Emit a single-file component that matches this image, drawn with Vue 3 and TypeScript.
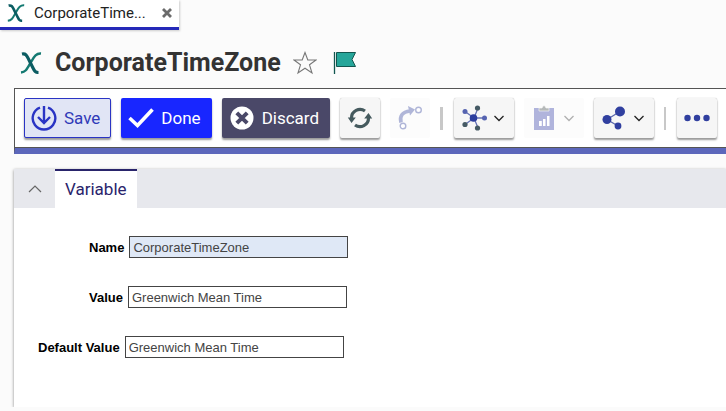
<script setup lang="ts">
import { computed, ref } from 'vue'

interface Field {
  id: string
  label: string
  value: string
  locked: boolean
  wide: boolean
}

const title = 'CorporateTimeZone'
const tabTitle = computed(() => (title.length > 14 ? `${title.slice(0, 13)}...` : title))
const starred = ref(false)
const expanded = ref(true)
const fields = ref<Field[]>([
  { id: 'name', label: 'Name', value: 'CorporateTimeZone', locked: true, wide: false },
  { id: 'value', label: 'Value', value: 'Greenwich Mean Time', locked: false, wide: false },
  { id: 'default-value', label: 'Default Value', value: 'Greenwich Mean Time', locked: false, wide: true },
])
</script>

<template>
  <div class="page">
    <nav class="tabs" aria-label="Open items">
      <div class="doc-tab">
        <svg class="tab-logo" viewBox="0 0 22 22" aria-hidden="true">
          <path d="M21 1.500C16 1 14 5 11 10C7 17 6 20 1 20.500" fill="none" stroke="#147a72" stroke-width="2.400" />
          <path d="M2 2C6 1 7 4 9 8L12.500 15C14.500 19 15 20.500 18.500 20.500" fill="none" stroke="#0b5c62" stroke-width="3.200" />
        </svg>
        <a class="tab-name" href="#variable">{{ tabTitle }}</a>
        <button class="tab-close" type="button" aria-label="Close">
          <svg viewBox="0 0 12 12"><path d="M2 2L10 10M10 2L2 10" stroke="#6b6b6b" stroke-width="2.800" /></svg>
        </button>
      </div>
    </nav>

    <header class="heading">
      <svg class="logo" viewBox="0 0 22 22" aria-hidden="true">
        <path d="M21 1.500C16 1 14 5 11 10C7 17 6 20 1 20.500" fill="none" stroke="#147a72" stroke-width="2.400" />
        <path d="M2 2C6 1 7 4 9 8L12.500 15C14.500 19 15 20.500 18.500 20.500" fill="none" stroke="#0b5c62" stroke-width="3.200" />
      </svg>
      <h1>{{ title }}</h1>
      <button class="plain star" type="button" aria-label="Favorite" :aria-pressed="starred" @click="starred = !starred">
        <svg viewBox="0 0 24 24"><path d="M12 1.500L14.800 9H23L16.500 13.800L19 22L12 17.200L5 22L7.500 13.800L1 9H9.200Z" :fill="starred ? '#777' : 'none'" stroke="#777" stroke-width="1.100" /></svg>
      </button>
      <button class="plain flag" type="button" aria-label="Flag">
        <svg viewBox="0 0 24 24"><path d="M1.500 1V23" stroke="#12564f" stroke-width="1.300" /><path d="M3.500 1.500H22.500L19 8.500L22.500 15.500H3.500Z" fill="#26a69a" stroke="#12564f" /></svg>
      </button>
    </header>

    <div class="toolbar" role="toolbar" aria-label="Actions">
      <button class="btn save" type="button">
        <svg viewBox="0 0 26 26"><path d="M9 2.600A11.300 11.300 0 1 0 17 2.600M13 1V17M7 12L13 18L19 12" fill="none" stroke="#2a34c4" stroke-width="2.400" /></svg>
        Save
      </button>
      <button class="btn done" type="button">
        <svg viewBox="0 0 26 26"><path d="M1.500 13L9.500 20.500L24.500 4.500" fill="none" stroke="#fff" stroke-width="3.600" /></svg>
        Done
      </button>
      <button class="btn discard" type="button">
        <svg viewBox="0 0 26 26"><circle cx="13" cy="13" r="11.500" fill="#fff" /><path d="M7.800 7.800L18.200 18.200M18.200 7.800L7.800 18.200" stroke="#4a4868" stroke-width="4" /></svg>
        Discard
      </button>
      <button class="btn tool" type="button" aria-label="Refresh">
        <svg viewBox="0 0 26 26"><g fill="none" stroke="#455a5e" stroke-width="3.200"><path d="M4.500 13A8.500 8.500 0 0 1 18 6M21.500 13A8.500 8.500 0 0 1 8 20" /></g><path d="M.8 12.500H8.800L4.500 18ZM17.200 13.500H25.200L21.500 8Z" fill="#455a5e" /></svg>
      </button>
      <button class="btn tool" type="button" aria-label="Promote" disabled>
        <svg viewBox="0 0 26 26"><path d="M4 17.500Q1.500 7.500 13 6" fill="none" stroke="#b0b6d8" stroke-width="3.600" /><path d="M11 1L18 4.500L13 10.500Z" fill="#b0b6d8" /><g fill="#fff" stroke="#b0b6d8" stroke-width="1.400"><circle cx="6" cy="21" r="2.800" /><circle cx="21.500" cy="5" r="2.800" /></g></svg>
      </button>
      <span class="divider"></span>
      <button class="btn tool" type="button" aria-label="Structure">
        <svg viewBox="0 0 26 26"><path d="M13 13L4 6.500M13 13L17 3M13 13H24M13 13L17 23M13 13L4 19.500" stroke="#6573b5" stroke-width="1.300" /><circle cx="12.500" cy="13" r="3.800" fill="#2c3e9e" /><g fill="#5563b0"><circle cx="4" cy="6.500" r="2.500" /><circle cx="23.500" cy="13" r="2.500" /></g><g fill="#455a64"><circle cx="16.500" cy="3" r="2.600" /><circle cx="16.500" cy="23" r="2.600" /><circle cx="4" cy="19.500" r="2.600" /></g></svg>
        <svg class="caret" viewBox="0 0 10 10"><path d="M.5 3L5 7.500L9.500 3" fill="none" stroke="#222" stroke-width="1.300" /></svg>
      </button>
      <button class="btn tool" type="button" aria-label="Reports" disabled>
        <svg viewBox="0 0 26 26"><path d="M3 3H23V25H3Z" fill="#b0b4dc" /><path d="M8 6V3H11Q13 -2 15 3H18V6Z" fill="#b5b9b9" stroke="#fafafa" stroke-width=".6" /><path d="M8 16H10.800V21H8ZM12 14H14.500V21H12ZM16 11H18.500V21H16Z" fill="#fff" /></svg>
        <svg class="caret" viewBox="0 0 10 10"><path d="M.5 3L5 7.500L9.500 3" fill="none" stroke="#b0b0b0" stroke-width="1.300" /></svg>
      </button>
      <button class="btn tool" type="button" aria-label="Share">
        <svg viewBox="0 0 26 26"><path d="M6 14.500L19 6.500M6 14.500L17 21" stroke="#5b68ae" stroke-width="1.400" /><g fill="#303f9f"><circle cx="6" cy="14.500" r="4.500" /><circle cx="19" cy="6.500" r="5" /><circle cx="17" cy="21" r="3.400" /></g></svg>
        <svg class="caret" viewBox="0 0 10 10"><path d="M.5 3L5 7.500L9.500 3" fill="none" stroke="#222" stroke-width="1.300" /></svg>
      </button>
      <span class="divider thin"></span>
      <button class="btn tool" type="button" aria-label="More">
        <svg viewBox="0 0 26 26"><g fill="#303f9f"><circle cx="3.500" cy="13" r="3.200" /><circle cx="13" cy="13" r="3.200" /><circle cx="22.500" cy="13" r="3.200" /></g></svg>
      </button>
    </div>

    <main class="panel">
      <div class="panel-head">
        <button class="plain collapse" type="button" aria-label="Collapse" :aria-expanded="expanded" @click="expanded = !expanded">
          <svg viewBox="0 0 14 8"><path d="M1 7L7 1L13 7" fill="none" stroke="#666" stroke-width="1.200" /></svg>
        </button>
        <a class="panel-tab" href="#variable">Variable</a>
      </div>
      <form v-show="expanded" id="variable" class="form" @submit.prevent>
        <div v-for="field in fields" :key="field.id" class="row" :class="{ wide: field.wide }">
          <label :for="field.id">{{ field.label }}</label>
          <input :id="field.id" v-model="field.value" type="text" :readonly="field.locked" />
        </div>
      </form>
    </main>
  </div>
</template>

<style>
body {
  background: #fbfbfb;
  overflow: hidden;
}
</style>

<style scoped>
* {
  box-sizing: border-box;
}
.page {
  font-family: Roboto, sans-serif;
  color: #333;
}
button {
  font: inherit;
  padding: 0;
  border: 0;
  background: none;
}
a {
  color: inherit;
  text-decoration: none;
}
svg {
  display: block;
  flex: none;
}
.tabs {
  display: flex;
}
.doc-tab {
  display: flex;
  align-items: center;
  width: 179px;
  height: 30px;
  padding: 0 6px 2px 7px;
  background: #fff;
  border-bottom: 3px solid #2529b8;
  box-shadow: 1px 1px 2px #ccc;
}
.tab-logo {
  width: 18px;
  height: 18px;
}
.tab-name {
  flex: 1;
  margin-left: 9px;
  font-size: 15px;
  line-height: 20px;
  color: #222;
  white-space: nowrap;
}
.tab-close svg {
  width: 12px;
  height: 12px;
}
.heading {
  display: flex;
  align-items: center;
  height: 58px;
  padding: 8px 20px 0;
}
.logo {
  width: 22px;
  height: 22px;
}
h1 {
  margin: 0 12px 0 13px;
  font-size: 25px;
  line-height: 32px;
  font-weight: 700;
}
.star svg,
.flag svg {
  width: 24px;
  height: 24px;
}
.flag {
  margin-left: 16px;
}
.toolbar {
  display: flex;
  align-items: center;
  gap: 10px;
  height: 66px;
  margin-left: 14px;
  padding: 0 0 1px 9px;
  background: #fff;
  border: solid #555;
  border-width: 1px 0 0 1px;
  border-bottom: 6px solid #5c67bb;
  box-shadow: inset 0 -1px #555;
}
.btn {
  flex: none;
  display: flex;
  align-items: center;
  height: 40px;
  gap: 7px;
  border-radius: 2px;
  font-size: 17px;
  line-height: 24px;
  box-shadow: 0 2px 2px #999;
}
.btn svg {
  width: 26px;
  height: 26px;
}
.save {
  padding: 0 10px 0 6px;
  color: #303ab8;
  background: #e1e5f5;
  border: 1px solid #2a34c4;
}
.done,
.discard {
  padding: 0 11px 0 7px;
  color: #fff;
  background: #1826ff;
}
.discard {
  background: #4a4868;
}
.tool {
  padding: 0 7px;
  background: #f6f6f6;
  box-shadow: 0 2px 2px #999, 0 0 1px #aaa;
}
.tool:disabled {
  background: #fcfcfc;
  box-shadow: none;
}
.btn .caret {
  width: 10px;
  height: 10px;
}
.tool:has(.caret) {
  padding-right: 10px;
}
.divider {
  flex: none;
  width: 3px;
  height: 23px;
  margin-right: 1px;
  background: #c8c8c8;
}
.thin {
  width: 2px;
}
.panel {
  margin: 15px 0 0 14px;
  background: #fff;
  box-shadow: 0 1px 3px #888;
}
.panel-head {
  display: flex;
  height: 39px;
  background: #e7e8ed;
}
.collapse {
  display: flex;
  align-items: center;
  justify-content: center;
  width: 41px;
}
.collapse svg {
  width: 14px;
  height: 8px;
}
.panel-tab {
  padding: 6px 10px;
  font-size: 17px;
  line-height: 24px;
  color: #29246b;
  background: #fff;
  border-top: 2px solid #29246b;
}
.form {
  display: flex;
  flex-direction: column;
  gap: 28px;
  padding: 28px 0 49px;
  font-family: "Liberation Sans", Arial, sans-serif;
  font-size: 13px;
}
.row {
  display: flex;
  align-items: center;
  gap: 5px;
  padding-left: 75px;
}
.wide {
  padding-left: 24px;
}
label {
  font-weight: 700;
  color: #000;
}
input {
  width: 219px;
  height: 22px;
  padding: 0 3px;
  border: 1px solid #444;
  border-radius: 0;
  outline: 0;
  font: inherit;
  color: #444;
  background: #fff;
}
input:read-only {
  background: #dfe8f6;
}
</style>
